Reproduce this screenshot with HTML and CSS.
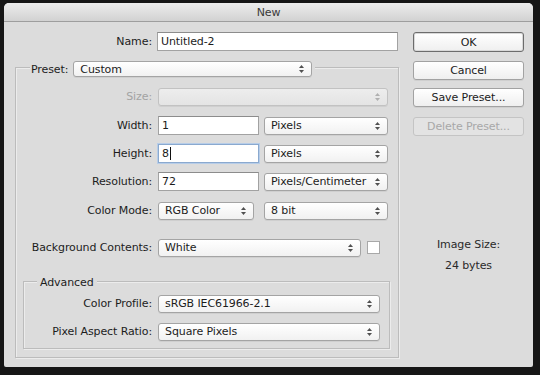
FILE: index.html
```html
<!DOCTYPE html>
<html>
<head>
<meta charset="utf-8">
<title>New</title>
<link rel="stylesheet" href="styles.css">
</head>
<body>
<div class="window">
  <div class="titlebar">New</div>
  <div class="content">
    <div class="main">
      <div class="row name-row">
        <span class="lbl lbl-name">Name:</span>
        <div class="field w-name">Untitled-2</div>
      </div>
      <div class="group preset-group">
        <div class="group-head preset-head">
          <span class="head-label">Preset:</span>
          <div class="select w-preset">Custom<svg class="arr" viewBox="0 0 5 8"><polygon points="0,3 2.5,0 5,3"/><polygon points="0,5 2.5,8 5,5"/></svg></div>
        </div>
        <div class="rows">
          <div class="row">
            <span class="lbl lbl-dis">Size:</span>
            <div class="select select-dis w-size"><span></span><svg class="arr" viewBox="0 0 5 8"><polygon points="0,3 2.5,0 5,3"/><polygon points="0,5 2.5,8 5,5"/></svg></div>
          </div>
          <div class="row mt1">
            <span class="lbl">Width:</span>
            <div class="field w-num">1</div>
            <div class="select w-unit">Pixels<svg class="arr" viewBox="0 0 5 8"><polygon points="0,3 2.5,0 5,3"/><polygon points="0,5 2.5,8 5,5"/></svg></div>
          </div>
          <div class="row">
            <span class="lbl">Height:</span>
            <div class="field w-num focus">8<span class="caret"></span></div>
            <div class="select w-unit">Pixels<svg class="arr" viewBox="0 0 5 8"><polygon points="0,3 2.5,0 5,3"/><polygon points="0,5 2.5,8 5,5"/></svg></div>
          </div>
          <div class="row">
            <span class="lbl">Resolution:</span>
            <div class="field w-num">72</div>
            <div class="select w-unit">Pixels/Centimeter<svg class="arr" viewBox="0 0 5 8"><polygon points="0,3 2.5,0 5,3"/><polygon points="0,5 2.5,8 5,5"/></svg></div>
          </div>
          <div class="row mt1 wide-gap">
            <span class="lbl">Color Mode:</span>
            <div class="select w-mode">RGB Color<svg class="arr" viewBox="0 0 5 8"><polygon points="0,3 2.5,0 5,3"/><polygon points="0,5 2.5,8 5,5"/></svg></div>
            <div class="select w-unit">8 bit<svg class="arr" viewBox="0 0 5 8"><polygon points="0,3 2.5,0 5,3"/><polygon points="0,5 2.5,8 5,5"/></svg></div>
          </div>
          <div class="row mt9">
            <span class="lbl">Background Contents:</span>
            <div class="select w-bg">White<svg class="arr" viewBox="0 0 5 8"><polygon points="0,3 2.5,0 5,3"/><polygon points="0,5 2.5,8 5,5"/></svg></div>
            <div class="swatch"></div>
          </div>
        </div>
        <div class="group adv-group">
          <div class="group-head adv-head">Advanced</div>
          <div class="rows adv-rows">
            <div class="row">
              <span class="lbl lbl-adv">Color Profile:</span>
              <div class="select w-adv">sRGB IEC61966-2.1<svg class="arr" viewBox="0 0 5 8"><polygon points="0,3 2.5,0 5,3"/><polygon points="0,5 2.5,8 5,5"/></svg></div>
            </div>
            <div class="row">
              <span class="lbl lbl-adv">Pixel Aspect Ratio:</span>
              <div class="select w-adv">Square Pixels<svg class="arr" viewBox="0 0 5 8"><polygon points="0,3 2.5,0 5,3"/><polygon points="0,5 2.5,8 5,5"/></svg></div>
            </div>
          </div>
        </div>
      </div>
    </div>
    <div class="side">
      <div class="btn btn-default">OK</div>
      <div class="btn btn-cancel">Cancel</div>
      <div class="btn btn-save">Save Preset...</div>
      <div class="btn btn-dis">Delete Preset...</div>
      <div class="info">
        <div>Image Size:</div>
        <div>24 bytes</div>
      </div>
    </div>
  </div>
</div>
</body>
</html>
```

FILE: styles.css
```css
* { box-sizing: border-box; }
html, body { margin: 0; padding: 0; }
body {
  background: #161616;
  width: 540px;
  height: 375px;
  overflow: hidden;
  font-family: "DejaVu Sans", "Liberation Sans", sans-serif;
  font-size: 11px;
  letter-spacing: -0.1px;
  color: #1c1c1c;
}
.window {
  margin: 3px 0 0 4px;
  width: 529px;
  height: 364px;
  background: #dcdcdc;
  border-radius: 5px 5px 2px 2px;
  overflow: hidden;
}
.titlebar {
  height: 19px;
  border-bottom: 1px solid #9e9e9e;
  background: linear-gradient(#ececec, #d2d2d2);
  text-align: center;
  line-height: 19px;
  color: #3a3a3a;
  font-size: 11px;
}
.content {
  display: flex;
  padding-left: 11px;
}
.main {
  width: 384px;
  padding-top: 10px;
}
.row {
  display: flex;
  align-items: center;
  height: 19px;
  gap: 5px;
}
.lbl {
  width: 129px;
  text-align: right;
  margin-right: 1px;
  white-space: nowrap;
}
.lbl-name { width: 137px; margin-right: 0; }
.lbl-dis { color: #a3a3a3; }
.lbl-adv { width: 128px; }
.field {
  height: 19px;
  background: #fff;
  border: 1px solid #a2a2a2;
  border-top-color: #8c8c8c;
  padding-left: 3px;
  line-height: 17px;
  display: flex;
  align-items: center;
}
.field.focus {
  border-color: #8aa9cf;
  box-shadow: 0 0 0 1px #b7cde8;
}
.caret {
  display: inline-block;
  width: 1px;
  height: 13px;
  background: #111;
  margin-left: 1px;
}
.w-name { width: 241px; }
.w-num { width: 101px; }
.select {
  height: 18px;
  display: flex;
  align-items: center;
  justify-content: space-between;
  padding: 0 7px 0 6px;
  background: linear-gradient(#ffffff, #f1f1f1);
  border: 1px solid #a4a4a4;
  border-radius: 3px;
  box-shadow: 0 1px 0 rgba(0,0,0,0.06);
  white-space: nowrap;
}
.arr { width: 5px; height: 8px; fill: #505050; flex: none; }
.select-dis { background: linear-gradient(#ededed, #e4e4e4); border-color: #c2c2c2; }
.select-dis .arr { fill: #b0b0b0; }
.w-preset { width: 239px; height: 16px; }
.w-size { width: 230px; }
.w-unit { width: 124px; }
.w-mode { width: 96px; }
.wide-gap .w-unit { margin-left: 5px; }
.w-bg { width: 203px; }
.w-adv { width: 222px; }
.swatch {
  width: 13px;
  height: 13px;
  background: #fff;
  border: 1px solid #a8a8a8;
  margin-left: 1px;
}
.group {
  border: 1px solid #bcbcbc;
  box-shadow: 1px 1px 0 #ececec, inset 1px 1px 0 #ececec;
}
.preset-group {
  margin-top: 16px;
  padding: 0 8px 8px 7px;
  height: 291px;
}
.group-head {
  display: flex;
  align-items: center;
  width: fit-content;
  background: #dcdcdc;
}
.preset-head {
  margin: -7px 0 0 7px;
  height: 16px;
  padding: 0 3px 0 1px;
  gap: 5px;
}
.rows {
  display: flex;
  flex-direction: column;
  gap: 9px;
  margin-top: 10px;
}
.mt1 { margin-top: 1px; }
.mt9 { margin-top: 9px; }
.adv-group {
  margin-top: 24px;
  padding: 0 0 7px 0;
}
.adv-head {
  margin: -7px 0 0 13px;
  height: 14px;
  padding: 0 3px;
}
.adv-rows { margin-top: 5px; }
.side {
  margin-left: 14px;
  width: 111px;
  padding-top: 10px;
  display: flex;
  flex-direction: column;
}
.btn {
  height: 19px;
  display: flex;
  align-items: center;
  justify-content: center;
  background: linear-gradient(#ffffff, #efefef);
  border: 1px solid #a2a2a2;
  border-radius: 3px;
  box-shadow: 0 1px 0 rgba(0,0,0,0.06);
}
.btn-default {
  height: 20px;
  border-color: #6c6c6c;
  box-shadow: inset 0 0 0 1px #d8d8d8;
}
.btn-cancel { margin-top: 9px; }
.btn-save { margin-top: 8px; }
.btn-dis {
  margin-top: 10px;
  color: #a8a8a8;
  background: #e3e3e3;
  border-color: #c4c4c4;
  box-shadow: none;
}
.info {
  margin-top: 98px;
  text-align: center;
  line-height: 21px;
  color: #2a2a2a;
}
```
